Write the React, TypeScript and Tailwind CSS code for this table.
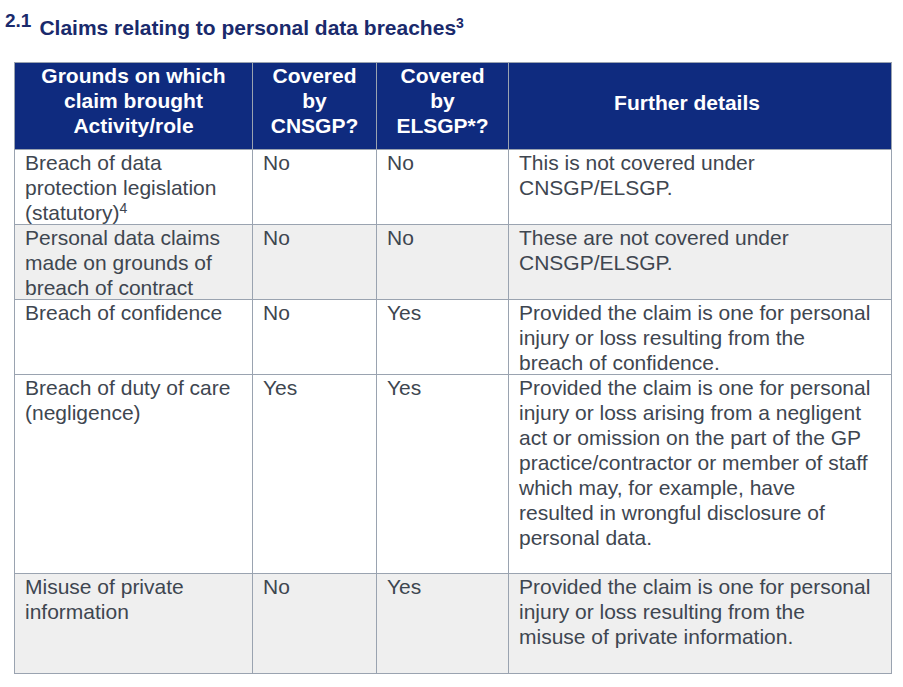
import React from "react";

interface Row {
  grounds: React.ReactNode;
  cnsgp: string;
  elsgp: string;
  details: React.ReactNode;
  height: string;
  shaded: boolean;
}

const rows: Row[] = [
  {
    grounds: (
      <>
        Breach of data
        <br />
        protection legislation
        <br />
        (statutory)<sup className="text-[14px]">4</sup>
      </>
    ),
    cnsgp: "No",
    elsgp: "No",
    details: (
      <>
        This is not covered under
        <br />
        CNSGP/ELSGP.
      </>
    ),
    height: "h-[75px]",
    shaded: false,
  },
  {
    grounds: (
      <>
        Personal data claims
        <br />
        made on grounds of
        <br />
        breach of contract
      </>
    ),
    cnsgp: "No",
    elsgp: "No",
    details: (
      <>
        These are not covered under
        <br />
        CNSGP/ELSGP.
      </>
    ),
    height: "h-[75px]",
    shaded: true,
  },
  {
    grounds: <>Breach of confidence</>,
    cnsgp: "No",
    elsgp: "Yes",
    details: (
      <>
        Provided the claim is one for personal
        <br />
        injury or loss resulting from the
        <br />
        breach of confidence.
      </>
    ),
    height: "h-[75px]",
    shaded: false,
  },
  {
    grounds: (
      <>
        Breach of duty of care
        <br />
        (negligence)
      </>
    ),
    cnsgp: "Yes",
    elsgp: "Yes",
    details: (
      <>
        Provided the claim is one for personal
        <br />
        injury or loss arising from a negligent
        <br />
        act or omission on the part of the GP
        <br />
        practice/contractor or member of staff
        <br />
        which may, for example, have
        <br />
        resulted in wrongful disclosure of
        <br />
        personal data.
      </>
    ),
    height: "h-[199px]",
    shaded: false,
  },
  {
    grounds: (
      <>
        Misuse of private
        <br />
        information
      </>
    ),
    cnsgp: "No",
    elsgp: "Yes",
    details: (
      <>
        Provided the claim is one for personal
        <br />
        injury or loss resulting from the
        <br />
        misuse of private information.
      </>
    ),
    height: "h-[100px]",
    shaded: true,
  },
];

const headCell =
  "border border-[#9aa3b0] bg-[#0f2b7f] text-white font-bold text-center align-top px-1 pt-0";
const bodyCell =
  "border border-[#9aa3b0] align-top pl-[10px] pr-[6px] pt-0 text-left";

export default function App() {
  return (
    <div className="min-h-screen bg-white font-['Liberation_Sans',Arial,sans-serif] pt-[10px]">
      <div className="flex items-start pl-[5px] h-[30px] text-[#1a2a6c] font-bold">
        <span className="text-[19px] leading-[22px]">2.1</span>
        <span className="ml-[8px] mt-[5px] text-[21px] leading-[25px]">
          Claims relating to personal data breaches
          <sup className="text-[14px]">3</sup>
        </span>
      </div>

      <table className="ml-[14px] mt-[22px] w-[877px] table-fixed border-collapse text-[21px] leading-[25px] text-[#3e4650]">
        <colgroup>
          <col className="w-[238px]" />
          <col className="w-[124px]" />
          <col className="w-[132px]" />
          <col className="w-[383px]" />
        </colgroup>
        <thead>
          <tr className="h-[87px]">
            <th className={headCell}>
              Grounds on which
              <br />
              claim brought
              <br />
              Activity/role
            </th>
            <th className={headCell}>
              Covered
              <br />
              by
              <br />
              CNSGP?
            </th>
            <th className={headCell}>
              Covered
              <br />
              by
              <br />
              ELSGP*?
            </th>
            <th className="border border-[#9aa3b0] bg-[#0f2b7f] text-white font-bold text-center align-middle pb-[8px] pr-[26px]">
              Further details
            </th>
          </tr>
        </thead>
        <tbody>
          {rows.map((row, i) => (
            <tr
              key={i}
              className={`${row.height} ${row.shaded ? "bg-[#efefef]" : "bg-white"}`}
            >
              <td className={bodyCell}>
                <div className="-mb-px">{row.grounds}</div>
              </td>
              <td className={bodyCell}>
                <div className="-mb-px">{row.cnsgp}</div>
              </td>
              <td className={bodyCell}>
                <div className="-mb-px">{row.elsgp}</div>
              </td>
              <td className={bodyCell}>
                <div className="-mb-px">{row.details}</div>
              </td>
            </tr>
          ))}
        </tbody>
      </table>
    </div>
  );
}
